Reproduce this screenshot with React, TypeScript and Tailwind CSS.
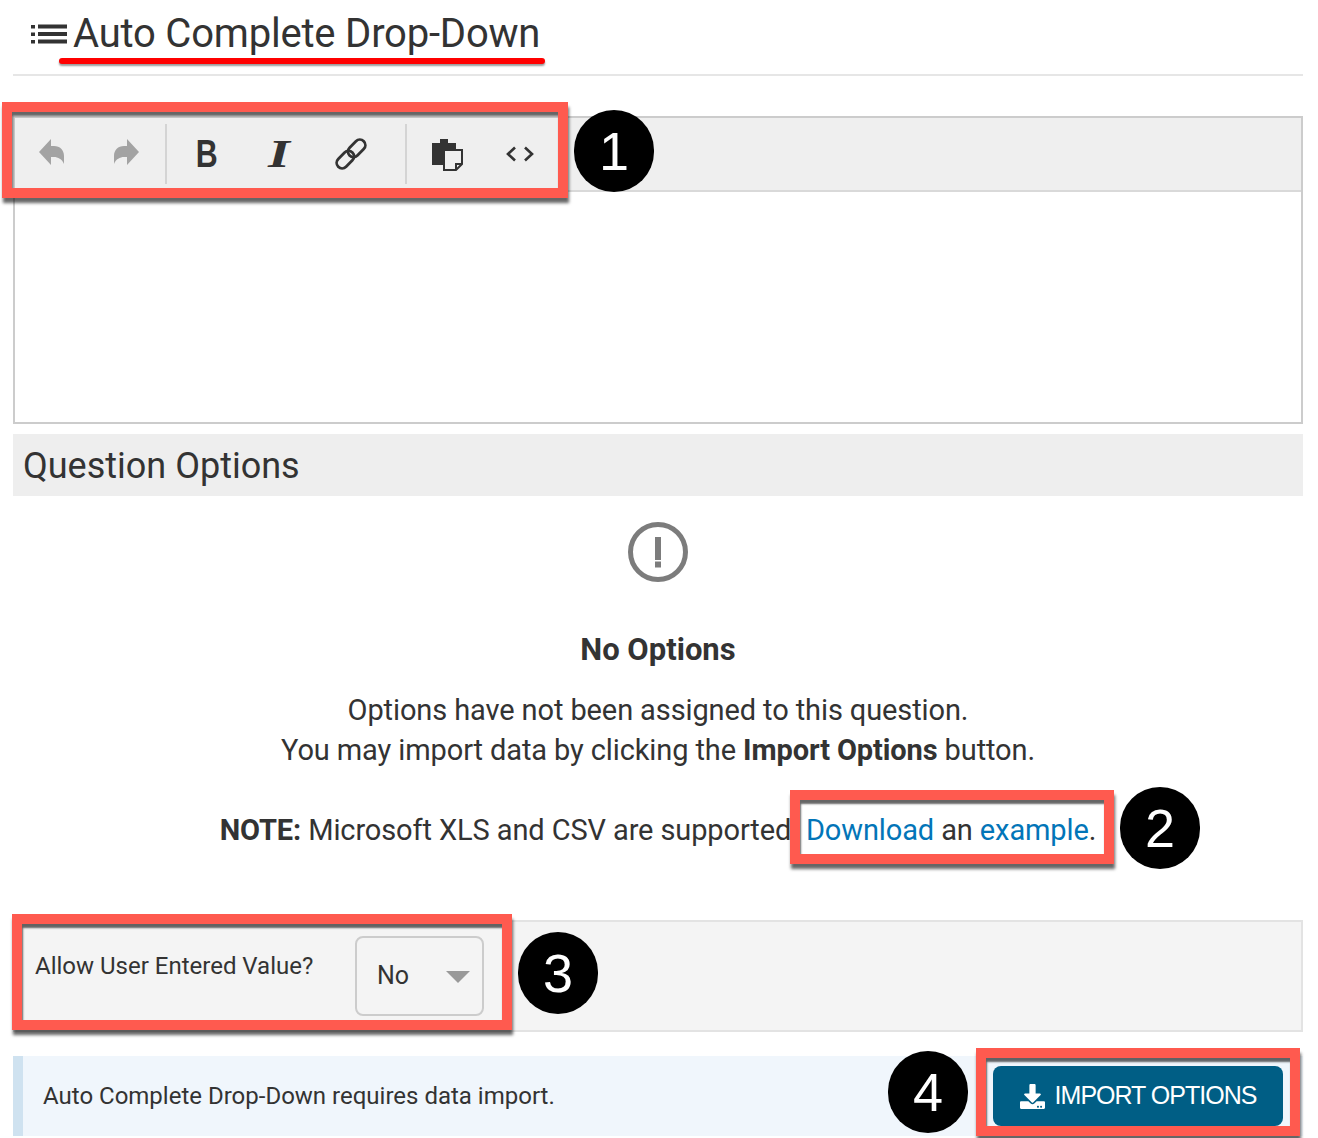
import { FaDownload } from "react-icons/fa";

// red callout frame, drawn over the page
function Callout({ className }: { className: string }) {
  return (
    <div
      className={`absolute border-[10px] border-[#ff5a4f] shadow-[1px_5px_3px_rgba(0,0,0,0.6),inset_1px_4px_2px_rgba(0,0,0,0.6)] ${className}`}
    />
  );
}

function Badge({ n, className }: { n: number; className: string }) {
  return (
    <div
      className={`absolute flex items-center justify-center rounded-full bg-black text-white text-[54px] w-[80px] h-[82px] font-['Liberation_Sans',sans-serif] ${className}`}
    >
      {n}
    </div>
  );
}

function ToolBtn({ children, className }: { children: React.ReactNode; className: string }) {
  return <div className={`flex items-center justify-center ${className}`}>{children}</div>;
}

function UndoIcon({ flip }: { flip?: boolean }) {
  return (
    <svg width="25" height="32" viewBox="0 0 25 32" fill="#a3a3a3" className={flip ? "-scale-x-100" : ""}>
      <path d="M0 13 12 0v7h3c6 0 10 4 10 10v8c-2-5-6-7-10-7h-3v8z" />
    </svg>
  );
}

export default function App() {
  return (
    <div className="relative w-[1318px] h-[1138px] overflow-hidden bg-white pl-[13px] pr-[15px] font-['Roboto',sans-serif] text-[#333]">
      {/* Title */}
      <div className="flex items-center h-[76px] border-b-2 border-[#e6e6e6] pl-[18px] pb-[6px]">
        <svg width="36" height="20" viewBox="0 0 36 20" className="mr-[6px] fill-[#333]">
          <rect x="0" y="1" width="4" height="3.5" />
          <rect x="0" y="8.5" width="4" height="3.5" />
          <rect x="0" y="16" width="4" height="3.5" />
          <rect x="7" y="0.5" width="29" height="4" />
          <rect x="7" y="8" width="29" height="4" />
          <rect x="7" y="15.5" width="29" height="4" />
        </svg>
        <h1 className="text-[40px] leading-none font-normal tracking-[-0.2px] whitespace-nowrap">Auto Complete Drop-Down</h1>
      </div>

      {/* Editor */}
      <div className="mt-[40px] h-[308px] border-2 border-[#ccc]">
        <div className="flex items-center h-[74px] bg-[#efefef] border-b-2 border-[#d9d9d9]">
          <ToolBtn className="w-[72px] mt-[2px]"><UndoIcon /></ToolBtn>
          <ToolBtn className="w-[78px] mt-[2px]"><UndoIcon flip /></ToolBtn>
          <div className="w-[2px] h-[60px] bg-[#d4d4d4]" />
          <ToolBtn className="w-[80px]">
            <span className="text-[38px] leading-none font-bold scale-x-[0.8] font-['Liberation_Sans',sans-serif]">B</span>
          </ToolBtn>
          <ToolBtn className="w-[64px]">
            <span className="text-[40px] leading-none font-bold italic scale-x-[1.4] font-['Liberation_Serif',serif]">I</span>
          </ToolBtn>
          <ToolBtn className="w-[80px]">
            <svg width="32" height="32" viewBox="0 0 32 32" fill="none" stroke="#333" strokeWidth="2.8">
              <g transform="rotate(-45 16 16)">
                <rect x="-2" y="10.5" width="20" height="11" rx="5.5" />
                <rect x="14" y="10.5" width="20" height="11" rx="5.5" />
              </g>
            </svg>
          </ToolBtn>
          <div className="w-[2px] h-[60px] bg-[#d4d4d4] ml-[14px]" />
          <ToolBtn className="w-[82px]">
            <svg width="32" height="33" viewBox="0 0 32 33">
              <path d="M0 5h8V1h8v4h8v22H0z" fill="#333" />
              <path d="M12 12h18v14l-6 6H12z" fill="#efefef" stroke="#333" strokeWidth="2" />
              <path d="M30 26h-6v6" fill="none" stroke="#333" strokeWidth="2" />
            </svg>
          </ToolBtn>
          <ToolBtn className="w-[62px]">
            <svg width="28" height="16" viewBox="0 0 28 16" fill="none" stroke="#333" strokeWidth="2.6">
              <path d="M9 1.5 2 8l7 6.5M19 1.5 26 8l-7 6.5" />
            </svg>
          </ToolBtn>
        </div>
      </div>

      {/* Question options */}
      <div className="mt-[10px] h-[62px] bg-[#eee] flex items-center pl-[10px] pt-[2px] text-[36px]">Question Options</div>

      <div className="flex flex-col items-center">
        <svg width="60" height="60" viewBox="0 0 60 60" className="mt-[26px]" fill="none">
          <circle cx="30" cy="30" r="27.5" stroke="#7c7c7c" strokeWidth="5" />
          <rect x="27" y="15" width="6" height="23" fill="#7c7c7c" />
          <rect x="27" y="39.5" width="6" height="6" fill="#7c7c7c" />
        </svg>
        <h2 className="mt-[48px] text-[31px] leading-[40px] font-bold">No Options</h2>
        <p className="mt-[20px] text-[29px] leading-[40px] tracking-[-0.11px] text-center">
          Options have not been assigned to this question.
          <br />
          You may import data by clicking the <b>Import Options</b> button.
        </p>
        <p className="mt-[40px] text-[29px] leading-[40px] tracking-[-0.11px] whitespace-nowrap">
          <b>NOTE:</b> Microsoft XLS and CSV are supported. <span className="text-[#0275b8]">Download</span> an{" "}
          <span className="text-[#0275b8]">example</span>.
        </p>
      </div>

      {/* Allow user value */}
      <div className="mt-[70px] h-[112px] bg-[#f4f4f4] border-2 border-[#e3e3e3] flex pl-[20px] pt-[14px]">
        <span className="text-[24px] leading-[32px] w-[320px] mt-[14px]">Allow User Entered Value?</span>
        <div className="flex items-center justify-between w-[129px] h-[80px] rounded-[8px] border-2 border-[#ccc] pl-[20px] pr-[12px] text-[25px]">
          No
          <div className="w-0 h-0 mt-[2px] border-x-[12px] border-x-transparent border-t-[12px] border-t-[#999]" />
        </div>
      </div>

      {/* Info bar */}
      <div className="mt-[24px] h-[80px] bg-[#f0f6fc] border-l-[10px] border-[#cfe2f0] flex items-center justify-between pl-[20px] pr-[20px]">
        <span className="text-[24px]">Auto Complete Drop-Down requires data import.</span>
        <button className="flex items-center justify-center w-[290px] h-[60px] rounded-[8px] bg-[#005e85] text-white text-[25px] tracking-[-1px] font-['Liberation_Sans',sans-serif] gap-[10px]">
          <FaDownload className="text-[25px]" />
          IMPORT OPTIONS
        </button>
      </div>

      {/* Annotations */}
      <div className="absolute left-[59px] top-[58px] w-[486px] h-[6px] rounded-full bg-[#f00] shadow-[0_2px_2px_rgba(0,0,0,0.4)]" />
      <Callout className="left-[2px] top-[102px] w-[566px] h-[96px]" />
      <Callout className="left-[790px] top-[790px] w-[324px] h-[74px]" />
      <Callout className="left-[12px] top-[914px] w-[500px] h-[116px]" />
      <Callout className="left-[976px] top-[1048px] w-[324px] h-[88px]" />
      <Badge n={1} className="left-[574px] top-[110px]" />
      <Badge n={2} className="left-[1120px] top-[787px]" />
      <Badge n={3} className="left-[518px] top-[932px]" />
      <Badge n={4} className="left-[888px] top-[1051px]" />
    </div>
  );
}
